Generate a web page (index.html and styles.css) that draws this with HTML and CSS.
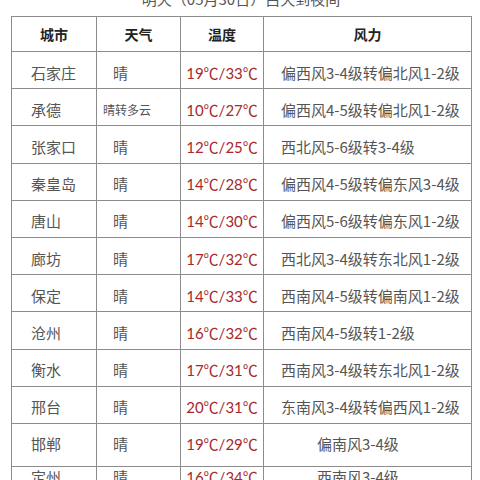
FILE: index.html
```html
<!DOCTYPE html>
<html lang="zh">
<head>
<meta charset="utf-8">
<link rel="stylesheet" href="styles.css">
</head>
<body>
<div class="page">
  <div class="title">明天（05月30日）白天到夜间</div>
  <table class="wx">
    <colgroup>
      <col class="c-city"><col class="c-wx"><col class="c-temp"><col class="c-wind">
    </colgroup>
    <thead>
      <tr><th>城市</th><th>天气</th><th>温度</th><th>风力</th></tr>
    </thead>
    <tbody>
      <tr><td class="city">石家庄</td><td class="sky">晴</td><td class="temp">19℃/33℃</td><td class="wind">偏西风3-4级转偏北风1-2级</td></tr>
      <tr><td class="city">承德</td><td class="sky small">晴转多云</td><td class="temp">10℃/27℃</td><td class="wind">偏西风4-5级转偏北风1-2级</td></tr>
      <tr><td class="city">张家口</td><td class="sky">晴</td><td class="temp">12℃/25℃</td><td class="wind">西北风5-6级转3-4级</td></tr>
      <tr><td class="city">秦皇岛</td><td class="sky">晴</td><td class="temp">14℃/28℃</td><td class="wind">偏西风4-5级转偏东风3-4级</td></tr>
      <tr><td class="city">唐山</td><td class="sky">晴</td><td class="temp">14℃/30℃</td><td class="wind">偏西风5-6级转偏东风1-2级</td></tr>
      <tr><td class="city">廊坊</td><td class="sky">晴</td><td class="temp">17℃/32℃</td><td class="wind">西北风3-4级转东北风1-2级</td></tr>
      <tr><td class="city">保定</td><td class="sky">晴</td><td class="temp">14℃/33℃</td><td class="wind">西南风4-5级转偏南风1-2级</td></tr>
      <tr><td class="city">沧州</td><td class="sky">晴</td><td class="temp">16℃/32℃</td><td class="wind">西南风4-5级转1-2级</td></tr>
      <tr><td class="city">衡水</td><td class="sky">晴</td><td class="temp">17℃/31℃</td><td class="wind">西南风3-4级转东北风1-2级</td></tr>
      <tr><td class="city">邢台</td><td class="sky">晴</td><td class="temp">20℃/31℃</td><td class="wind">东南风3-4级转偏西风1-2级</td></tr>
      <tr class="tall"><td class="city">邯郸</td><td class="sky">晴</td><td class="temp">19℃/29℃</td><td class="wind mid">偏南风3-4级</td></tr>
      <tr class="top"><td class="city">定州</td><td class="sky">晴</td><td class="temp">16℃/34℃</td><td class="wind mid">西南风3-4级</td></tr>
    </tbody>
  </table>
</div>
</body>
</html>
```
FILE: styles.css
```css
html, body {
  margin: 0;
  padding: 0;
  background: #fff;
}
body {
  font-family: "Noto Sans CJK SC", "Noto Sans", sans-serif;
  color: #555;
  overflow: hidden;
}
.page {
  padding-left: 11px;
}
.title {
  margin-top: -11px;
  height: 20px;
  line-height: 20px;
  margin-bottom: 7px;
  width: 460px;
  text-align: center;
  font-size: 15px;
  color: #555;
}
.wx {
  border-collapse: collapse;
  table-layout: fixed;
  width: 460px;
  font-size: 15px;
}
.c-city { width: 85px; }
.c-wx { width: 84px; }
.c-temp { width: 83px; }
.c-wind { width: 208px; }
.wx th, .wx td {
  border: 1px solid #8c8c8c;
  padding: 0;
  white-space: nowrap;
  overflow: hidden;
}
.wx th {
  height: 34px;
  font-weight: bold;
  color: #222;
  text-align: center;
  font-size: 14px;
}
.wx tbody tr {
  height: 37.2px;
}
.wx td {
  padding-top: 4px;
}
.wx tr.tall {
  height: 43px;
}
.wx tr.tall td {
  padding-top: 0;
  padding-bottom: 3px;
}
.wx tr.top td {
  vertical-align: top;
  padding-top: 0;
  line-height: 20px;
}
.city { padding-left: 19px !important; }
.sky { padding-left: 16px !important; }
.sky.small { padding-left: 6px !important; font-size: 12px; }
.temp {
  text-align: center;
  color: #a8282b;
  font-family: "Lato", "Noto Sans CJK SC", sans-serif;
  font-size: 15px;
}
.wind {
  padding-left: 17px !important;
  font-size: 15px;
}
.wind.mid { padding-left: 53px !important; }
```
